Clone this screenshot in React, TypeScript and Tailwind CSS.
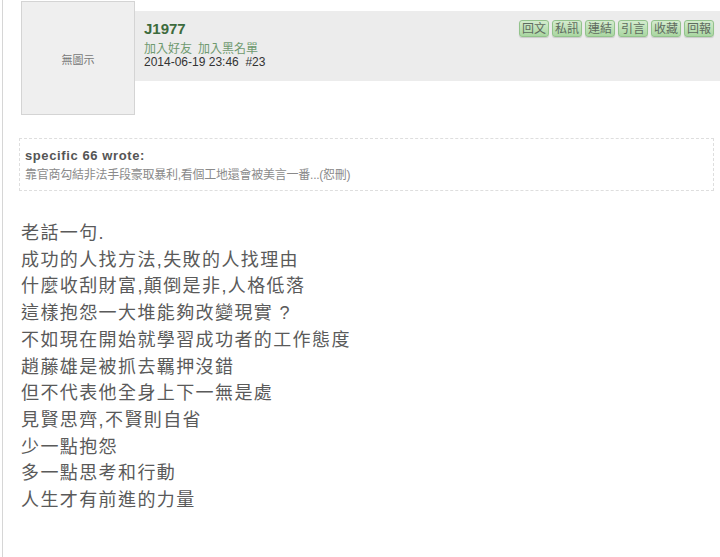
const buttons = ["回文", "私訊", "連結", "引言", "收藏", "回報"];

const lines = [
  "老話一句.",
  "成功的人找方法,失敗的人找理由",
  "什麼收刮財富,顛倒是非,人格低落",
  "這樣抱怨一大堆能夠改變現實 ?",
  "不如現在開始就學習成功者的工作態度",
  "趙藤雄是被抓去羈押沒錯",
  "但不代表他全身上下一無是處",
  "見賢思齊,不賢則自省",
  "少一點抱怨",
  "多一點思考和行動",
  "人生才有前進的力量",
];

const font = "font-['Liberation_Sans','Noto_Sans_CJK_TC',sans-serif]";

export default function App() {
  return (
    <div className={`w-[720px] h-[557px] bg-white overflow-hidden ${font}`}>
      <div className="ml-[2px] h-full border-l border-[#d6d6d6]">
        {/* header */}
        <div className="flex pt-px">
          <div className="ml-[18px] w-[114px] h-[114px] shrink-0 bg-[#efefef] border border-[#d4d4d4] flex items-center justify-center pt-[4px] text-[11px] text-[#777]">
            無圖示
          </div>
          <div className="flex-1 mt-[10px] h-[70px] bg-[#ececec] flex justify-between pl-[9px] pr-[6px]">
            <div className="pt-[9px]">
              <div className="text-[15px] leading-[18px] font-bold text-[#3d6b3d]">J1977</div>
              <div className="mt-[4px] text-[12px] leading-[14px] text-[#6f9a6f] flex gap-[6px]">
                <span>加入好友</span>
                <span>加入黑名單</span>
              </div>
              <div className="text-[12px] leading-[13px] text-[#333]">
                2014-06-19 23:46&nbsp;&nbsp;#23
              </div>
            </div>
            <div className="flex gap-[3px] pt-[9px] items-start">
              {buttons.map((b) => (
                <span
                  key={b}
                  className="w-[30px] h-[17px] flex items-center justify-center rounded-[3px] border border-[#93c38c] bg-gradient-to-b from-[#d4ecce] to-[#a9d6a1] text-[12px] leading-none text-[#5f6b5f] shadow-[0_1px_1px_rgba(0,0,0,0.15)]"
                >
                  {b}
                </span>
              ))}
            </div>
          </div>
        </div>

        {/* quote */}
        <div className="ml-[16px] mr-[6px] mt-[23px] h-[53px] border border-dashed border-[#dedede] px-[5px] pt-[9px]">
          <div className="text-[13px] leading-[15px] font-bold tracking-[0.6px] text-[#555]">
            specific 66 wrote:
          </div>
          <div className="mt-[4px] text-[12px] leading-[16px] tracking-[-0.25px] text-[#8a8a8a]">
            靠官商勾結非法手段豪取暴利,看個工地還會被美言一番...(恕刪)
          </div>
        </div>

        {/* body */}
        <div className="ml-[18px] mt-[29px] text-[18px] leading-[26.7px] tracking-[1.4px] text-[#5a5a5a]">
          {lines.map((l) => (
            <div key={l}>{l}</div>
          ))}
        </div>
      </div>
    </div>
  );
}
